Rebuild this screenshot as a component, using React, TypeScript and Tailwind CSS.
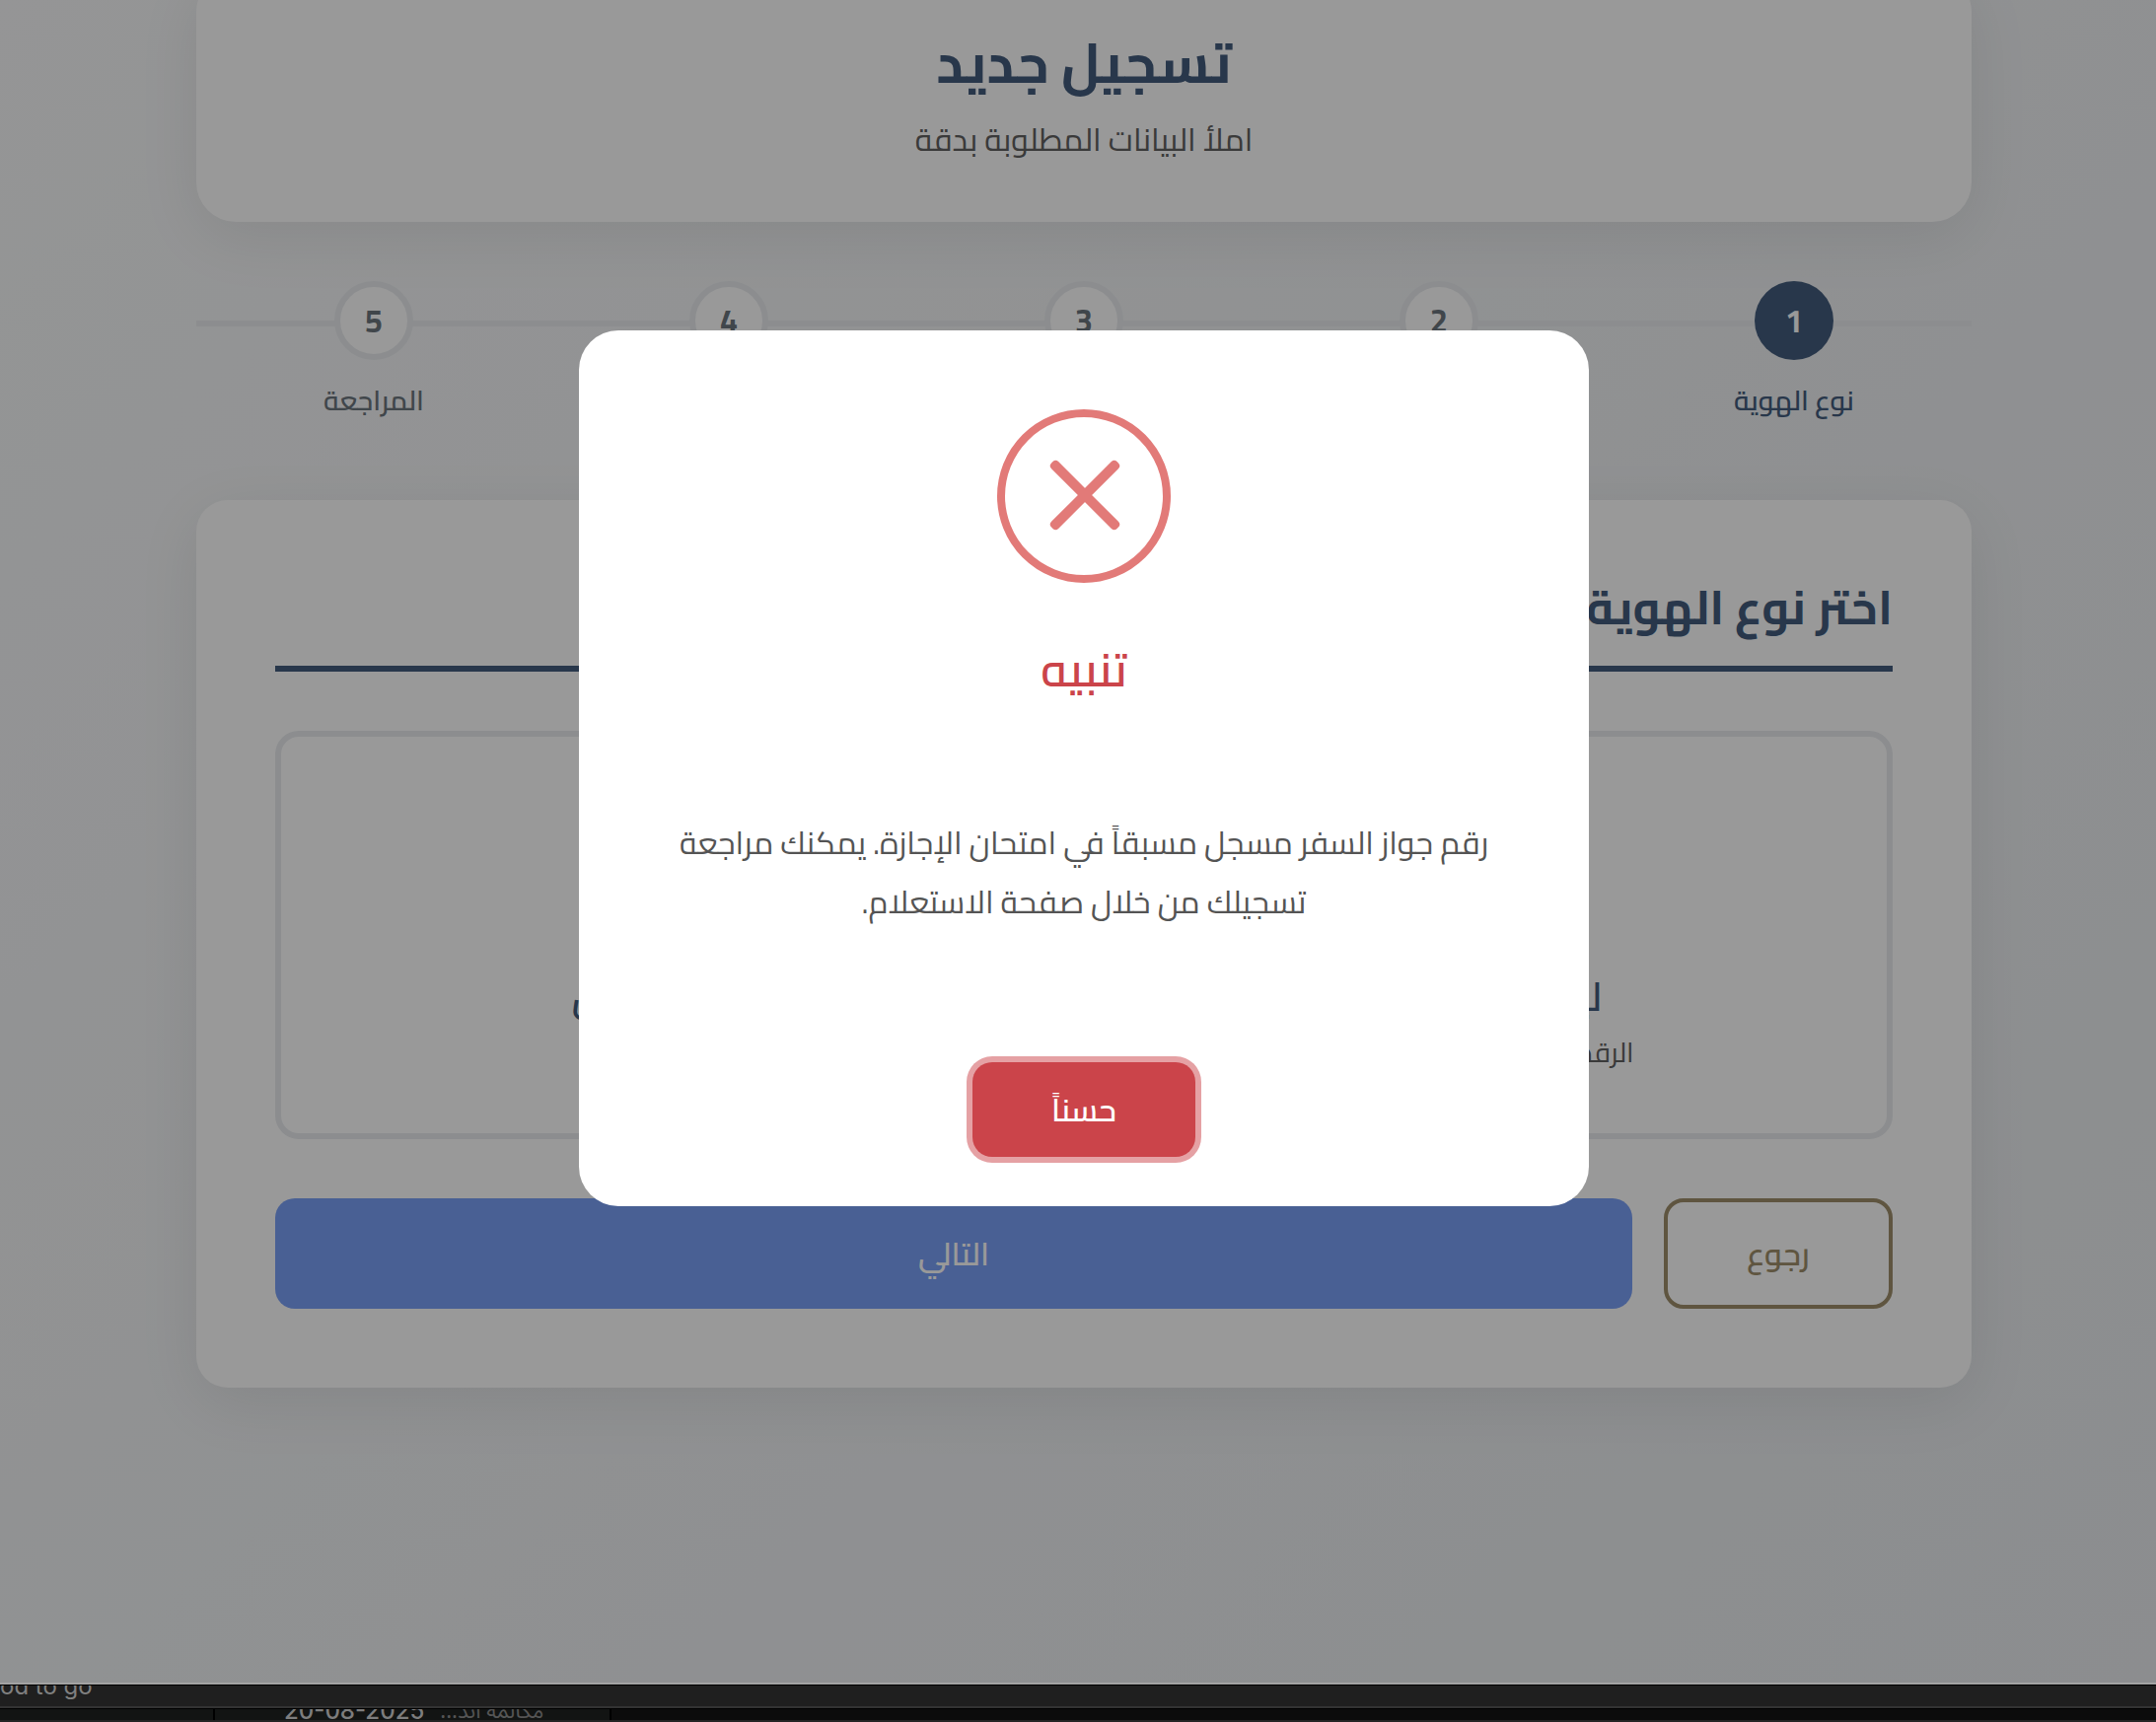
type Step = { number: number; label: string; active?: boolean };

const STEPS: Step[] = [
  { number: 1, label: 'نوع الهوية', active: true },
  { number: 2, label: 'البيانات' },
  { number: 3, label: 'الامتحان' },
  { number: 4, label: 'المرفقات' },
  { number: 5, label: 'المراجعة' },
];

const OPTIONS = [
  { title: 'ليبي الجنسية', hint: 'الرقم الوطني ورقم القيد' },
  { title: 'غير المحليين', hint: 'جواز السفر' },
];

function StepItem({ number, label, active }: Step) {
  return (
    <li className="flex flex-1 flex-col items-center gap-[17px]">
      <span
        className={
          active
            ? 'z-10 flex size-20 items-center justify-center rounded-full bg-[#445d7d] text-[32px] leading-[48px] font-bold text-white'
            : 'z-10 flex size-20 items-center justify-center rounded-full border-[6px] border-[#e9ecef] bg-white text-[32px] leading-[48px] font-bold text-[#6c757d]'
        }
      >
        {number}
      </span>
      <span
        className={
          active
            ? 'text-[28px] leading-[48px] font-semibold text-[#445d7d]'
            : 'text-[28px] leading-[48px] font-semibold text-[#6c757d]'
        }
      >
        {label}
      </span>
    </li>
  );
}

function OptionCard({ title, hint }: { title: string; hint: string }) {
  return (
    <button
      type="button"
      className="flex h-[414px] flex-col items-center justify-end rounded-3xl border-[6px] border-[#e9ecef] bg-white pb-[56px]"
    >
      <span className="text-[40px] leading-[60px] font-semibold text-[#445d7d]">{title}</span>
      <span className="text-[28px] leading-[52px] text-[#616161]">{hint}</span>
    </button>
  );
}

function ErrorIcon() {
  return (
    <svg viewBox="0 0 176 176" className="size-44" fill="none" aria-hidden="true">
      <circle cx="88" cy="88" r="84" stroke="#e27a78" strokeWidth="8" />
      <g fill="#e27a78">
        <rect x="42" y="82" width="94" height="10" rx="4" transform="rotate(45 89 87)" />
        <rect x="42" y="82" width="94" height="10" rx="4" transform="rotate(-45 89 87)" />
      </g>
    </svg>
  );
}

function AlertDialog() {
  return (
    <div className="absolute inset-0 z-20 flex items-center justify-center bg-black/40 pb-[148px] pl-3">
      <div
        role="alertdialog"
        aria-labelledby="alert-title"
        aria-describedby="alert-text"
        className="flex w-[1024px] flex-col items-center rounded-[40px] bg-white px-16 pt-20 pb-[50px]"
      >
        <ErrorIcon />
        <h2 id="alert-title" className="mt-[51px] text-[48px] leading-[72px] font-semibold text-[#cb444a]">
          تنبيه
        </h2>
        <p id="alert-text" className="mt-[110px] text-center text-[32px] leading-[60px] text-[#545454]">
          رقم جواز السفر مسجل مسبقاً في امتحان الإجازة. يمكنك مراجعة تسجيلك من خلال صفحة الاستعلام.
        </p>
        <button
          type="button"
          className="mt-[133px] h-24 rounded-[20px] bg-[#cb444a] px-20 text-[32px] leading-[48px] font-semibold text-white ring-[6px] ring-[#e5a1a4]"
        >
          حسناً
        </button>
      </div>
    </div>
  );
}

function BackgroundWindows() {
  return (
    <footer className="bg-[#0c0c0c]" dir="ltr">
      <div className="h-6 overflow-hidden border-t border-b-2 border-t-black border-b-[#333333] bg-[#1f1f1f]">
        <p className="-mt-[13px] font-['Inter'] text-[24px] leading-[28px] text-[#808080]">od to go</p>
      </div>
      <div className="flex h-[14px] overflow-hidden border-t border-b-2 border-t-black border-b-[#242424]">
        <div className="w-[218px] border-r-2 border-black bg-[#121413]" />
        <div className="flex w-[402px] gap-4 border-r-2 border-black bg-[#121413] pl-[70px] font-['Inter'] text-[24px] leading-[28px]">
          <span className="-mt-[12px] font-medium text-[#7d7d7d]">20-08-2025</span>
          <span className="-mt-[12px] font-['Noto_Sans_Arabic'] text-[22px] text-[#555555]" dir="rtl">
            مكالمة أيد...
          </span>
        </div>
      </div>
    </footer>
  );
}

export default function App() {
  return (
    <div className="flex min-h-screen flex-col font-['Cairo','Noto_Sans_Arabic',sans-serif]" dir="rtl">
      <main className="relative flex-1 overflow-hidden bg-linear-135 from-[#f8f9fa] to-[#e9ecef] pl-3">
        <div className="mx-auto w-full max-w-[1800px]">
          <header className="-mt-7 flex h-[253px] flex-col items-center rounded-[40px] bg-white pt-[50px] shadow-[0_16px_64px_rgba(0,0,0,0.08)]">
            <h1 className="text-[56px] leading-[84px] font-bold text-[#445d7d]">تسجيل جديد</h1>
            <p className="mt-[7px] text-[32px] leading-[56px] text-[#616161]">املأ البيانات المطلوبة بدقة</p>
          </header>

          <ol className="relative mt-[60px] flex">
            <li aria-hidden="true" className="absolute inset-x-0 top-10 h-[6px] bg-[#e9ecef]" />
            {STEPS.map((step) => (
              <StepItem key={step.number} {...step} />
            ))}
          </ol>

          <section className="mt-[77px] rounded-[32px] bg-white p-20 shadow-[0_16px_64px_rgba(0,0,0,0.08)]">
            <h2 className="border-b-[6px] border-[#445d7d] pb-8 text-[48px] leading-[56px] font-bold text-[#445d7d]">
              اختر نوع الهوية
            </h2>
            <div className="mt-[60px] grid grid-cols-2 gap-10">
              {OPTIONS.map((option) => (
                <OptionCard key={option.title} {...option} />
              ))}
            </div>
            <div className="mt-[60px] flex gap-8">
              <button
                type="button"
                className="h-28 w-[232px] rounded-[20px] border-4 border-[#9e8e6b] text-[32px] leading-[48px] font-semibold text-[#9e8e6b]"
              >
                رجوع
              </button>
              <button
                type="button"
                className="h-28 flex-1 rounded-[20px] bg-[#7aa0f7] text-[32px] leading-[48px] font-semibold text-white"
              >
                التالي
              </button>
            </div>
          </section>
        </div>
        <AlertDialog />
      </main>
      <div className="h-[2px] bg-[#a3a3a3]" />
      <BackgroundWindows />
    </div>
  );
}
